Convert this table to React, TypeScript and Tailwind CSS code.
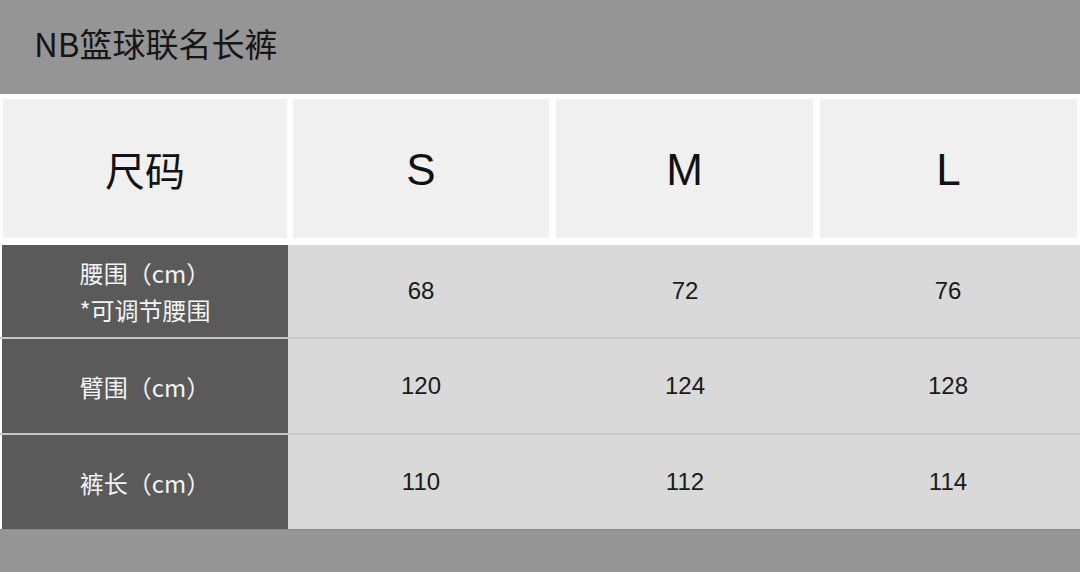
const rows = [
  { label: ['腰围（cm）', '*可调节腰围'], values: ['68', '72', '76'], h: 'h-[92px]' },
  { label: ['臂围（cm）'], values: ['120', '124', '128'], h: 'h-[96px]' },
  { label: ['裤长（cm）'], values: ['110', '112', '114'], h: 'h-[96px]' },
]

const cjk = { fontFamily: '"Noto Sans CJK SC", "Noto Sans", sans-serif' }
const latin = { fontFamily: '"Liberation Sans", Arial, sans-serif' }

export default function App() {
  return (
    <div className="w-[1080px] h-[572px] bg-white flex flex-col overflow-hidden" style={cjk}>
      {/* Title bar */}
      <div className="h-[94px] shrink-0 bg-[#959595] flex items-center pl-[34px] pb-[8px]">
        <span className="text-[33px] text-[#161616] leading-none">NB篮球联名长裤</span>
      </div>

      {/* Size header */}
      <div className="flex mt-[5px] pl-[3px] h-[139px] shrink-0">
        <div className="w-[284px] bg-[#f0f0f0] flex items-center justify-center">
          <span className="text-[40px] text-[#111] leading-none">尺码</span>
        </div>
        {['S', 'M', 'L'].map((s, i) => (
          <div
            key={s}
            className={`${i === 0 ? 'w-[256px] ml-[6px]' : 'w-[257px] ml-[7px]'} bg-[#f0f0f0] flex items-center justify-center`}
          >
            <span className="text-[44px] text-[#111] leading-none pt-[2px]" style={latin}>{s}</span>
          </div>
        ))}
      </div>

      {/* Measurement rows */}
      <div className="mt-[7px] flex flex-col shrink-0">
        {rows.map((r, i) => (
          <div key={i} className={`flex ${r.h} ${i > 0 ? 'border-t-2 border-[#c6c6c6]' : ''}`}>
            <div className="w-[2px] bg-white" />
            <div className="w-[286px] bg-[#5a5a5a] flex flex-col items-center justify-center text-[24px] text-[#f4f4f4] leading-[37px]">
              {r.label.map(l => (
                <span key={l}>{l}</span>
              ))}
            </div>
            <div className="flex-1 bg-[#d9d9d9] flex">
              {r.values.map((v, j) => (
                <div
                  key={j}
                  className={`${j === 0 ? 'w-[266px]' : j === 1 ? 'w-[262px]' : 'flex-1'} flex items-center justify-center`}
                >
                  <span className="text-[24px] text-[#1a1a1a] leading-none" style={latin}>{v}</span>
                </div>
              ))}
            </div>
          </div>
        ))}
      </div>

      {/* Bottom bar */}
      <div className="flex-1 bg-[#959595] border-t border-[#8a8a8a]" />
    </div>
  )
}
